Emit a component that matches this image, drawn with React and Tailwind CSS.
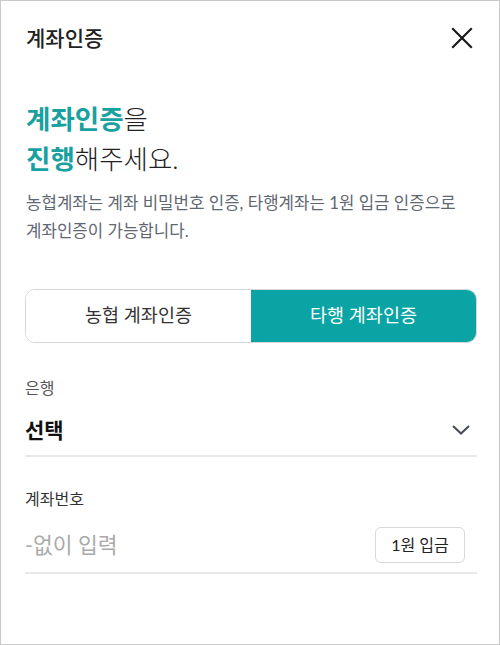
import React from 'react';

const font = "font-['Lato','Noto_Sans_CJK_KR',sans-serif]";

const App = () => {
  return (
    <div className={`h-[645px] w-[500px] bg-white border border-[#c9c9c9] flex flex-col ${font}`}>
      {/* Header */}
      <header className="h-[74px] flex items-center justify-between pl-[25px] pr-[26px]">
        <h1 className="text-[21px] text-[#222] font-medium">계좌인증</h1>
        <button className="text-[#1a1a1a]">
          <svg width="22" height="22" viewBox="0 0 22 22" fill="none" stroke="currentColor" strokeWidth="2.2" strokeLinecap="square">
            <path d="M2 2L20 20M20 2L2 20" />
          </svg>
        </button>
      </header>

      {/* Intro */}
      <section className="px-[25px] pt-[24px]">
        <h2 className="text-[26.5px] leading-[40px] text-[#222] font-light">
          <span className="text-[#19a0a0] font-bold">계좌인증</span>을
          <br />
          <span className="text-[#19a0a0] font-bold">진행</span>해주세요.
        </h2>
        <p className="mt-[10px] text-[16.8px] leading-[28px] text-[#5f6872]">
          농협계좌는 계좌 비밀번호 인증, 타행계좌는 1원 입금 인증으로
          <br />
          계좌인증이 가능합니다.
        </p>
      </section>

      {/* Segmented control */}
      <div className="ml-[24px] mr-[22px] mt-[44px] h-[54px] flex rounded-[10px] border border-[#d6d6d6] overflow-hidden">
        <button className="flex-1 bg-white text-[18.5px] text-[#333]">농협 계좌인증</button>
        <button className="flex-1 bg-[#0ba4a4] text-[18.5px] text-white">타행 계좌인증</button>
      </div>

      {/* Bank select */}
      <div className="ml-[24px] mr-[22px] mt-[35px]">
        <label className="block text-[16px] text-[#555] leading-[20px]">은행</label>
        <div className="mt-[11px] h-[48px] flex items-center justify-between border-b-2 border-[#e8e8e8] pb-[4px]">
          <span className="text-[21px] font-bold text-[#111]">선택</span>
          <svg width="20" height="12" viewBox="0 0 20 12" fill="none" stroke="#4a5058" strokeWidth="2.2" className="mr-[6px]">
            <path d="M2 2L10 9.5L18 2" />
          </svg>
        </div>
      </div>

      {/* Account number */}
      <div className="ml-[24px] mr-[22px] mt-[32px]">
        <label className="block text-[16px] text-[#333] leading-[20px]">계좌번호</label>
        <div className="mt-[9px] h-[56px] flex items-center justify-between border-b-2 border-[#e8e8e8]">
          <input
            type="text"
            placeholder="-없이 입력"
            className="flex-1 min-w-0 text-[21.5px] outline-none placeholder:text-[#aaaaaa] bg-transparent"
          />
          <button className="mr-[12px] h-[36px] w-[90px] rounded-[6px] border border-[#d9d9d9] text-[16px] text-[#222]">
            1원 입금
          </button>
        </div>
      </div>
    </div>
  );
};

export default App;
